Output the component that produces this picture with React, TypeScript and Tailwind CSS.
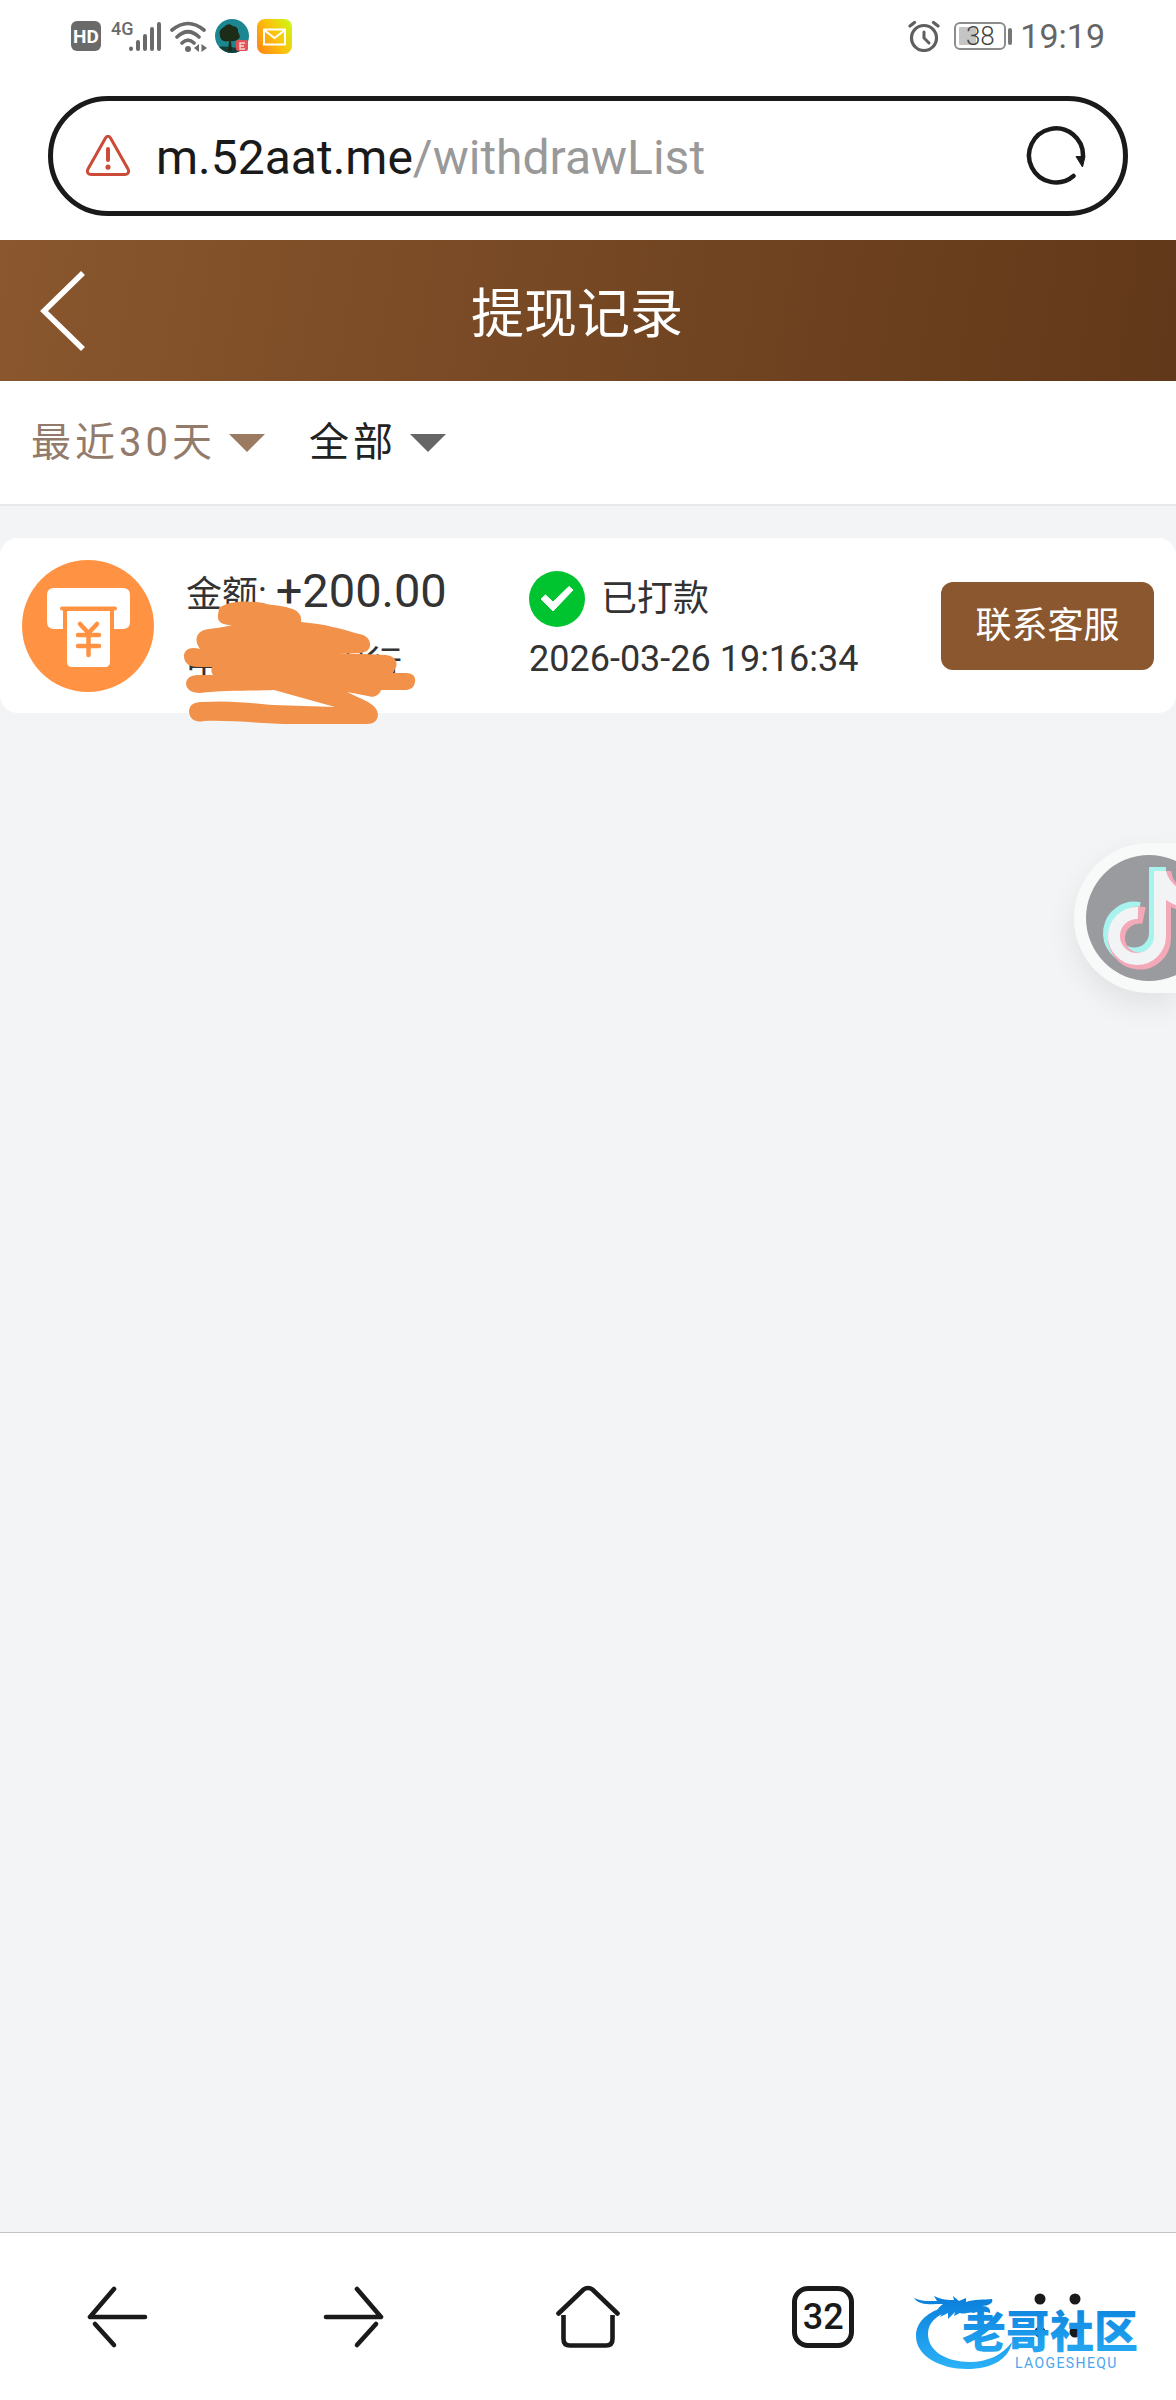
import type { ReactNode } from 'react';

const records = [
  {
    id: 1,
    amount: '+200.00',
    bankStart: '中',
    bankEnd: '银行',
    status: '已打款',
    time: '2026-03-26 19:16:34',
  },
];

function StatusBar() {
  return (
    <div className="h-[72px] px-[71px] flex items-center justify-between text-[#666]">
      <div className="flex items-center">
        <span className="w-[30px] h-[30px] mr-[10px] rounded-md bg-[#6a6a6a] text-white text-[19px] leading-none font-bold flex items-center justify-center">
          HD
        </span>
        <svg className="w-[50px] h-[34px]" viewBox="0 0 50 34" aria-hidden="true">
          <text x="0" y="16" fontSize="18" fontWeight="500" fill="#6a6a6a">4G</text>
          <g stroke="#6a6a6a" strokeWidth="4" strokeLinecap="round">
            <path d="M20 29.500V30M27 23V30M34 17V30M41 10V30M48 5V30" />
          </g>
        </svg>
        <svg className="w-[38px] h-[34px] ml-[8px]" viewBox="0 0 38 34" aria-hidden="true">
          <g fill="none" stroke="#6a6a6a" strokeWidth="3.600" strokeLinecap="round">
            <path d="M3 11Q19 -2 35 11M8 18Q19 7.500 30 18M13 24Q19 18 25 24" />
          </g>
          <circle cx="19" cy="30" r="3" fill="#6a6a6a" />
          <path d="M30 25V33L25 29ZM32.500 25V33L38 29Z" fill="#6a6a6a" />
        </svg>
        <svg className="w-[34px] h-[34px] ml-[8px]" viewBox="0 0 34 34" aria-hidden="true">
          <defs>
            <clipPath id="avatar">
              <circle cx="17" cy="17" r="17" />
            </clipPath>
          </defs>
          <g clipPath="url(#avatar)">
            <rect width="34" height="34" fill="#1c8791" />
            <path d="M0 28Q17 26 34 33V34H0Z" fill="#123f3c" />
            <path d="M5 17Q3 11 9 8Q13 3 18 7Q24 8 23 13Q27 18 22 21Q18 23 16 22L17 32H13L14 22Q6 24 5 17Z" fill="#1d2c17" />
          </g>
          <rect x="21" y="21" width="12" height="11" rx="2" fill="#e2545a" />
          <path d="M30 24H25V30H30M25 27H29" fill="none" stroke="#fbd3cc" strokeWidth="1.500" />
        </svg>
        <svg className="w-[35px] h-[35px] ml-[8px]" viewBox="0 0 35 35" aria-hidden="true">
          <defs>
            <linearGradient id="mail" x1="0" y1="0.800" x2="1" y2="0.200">
              <stop offset="0" stopColor="#ff8a12" />
              <stop offset="0.500" stopColor="#fdc00c" />
              <stop offset="1" stopColor="#d0f414" />
            </linearGradient>
          </defs>
          <rect width="35" height="35" rx="8" fill="url(#mail)" />
          <path d="M7 10.500H28V25.500H7ZM7 11L17.500 19L28 11" fill="none" stroke="#fff" strokeWidth="2" />
        </svg>
      </div>

      <div className="flex items-center">
        <svg className="w-[32px] h-[32px] mr-[14px]" viewBox="0 0 32 32" fill="none" stroke="#5f5f5f" strokeLinecap="round" aria-hidden="true">
          <circle cx="16" cy="18" r="12.500" strokeWidth="3.200" />
          <path d="M16 12V18L21 23" strokeWidth="3" />
          <path d="M2 6L6.500 2.500M30 6L25.500 2.500" strokeWidth="3.200" />
        </svg>
        <span className="w-[52px] h-[28px] p-[3px] rounded-md border-2 border-[#8c8c8c] flex items-center justify-center bg-linear-to-r from-[#c4c4c4] from-40% to-white to-40% bg-origin-content bg-clip-content text-[26px] leading-none font-light text-[#444]">
          38
        </span>
        <span className="w-[4px] h-[17px] ml-[2px] mr-[8px] rounded-sm bg-[#777]" />
        <span className="text-[34px] leading-none">19:19</span>
      </div>
    </div>
  );
}

function AddressBar() {
  return (
    <div className="py-[24px] px-[48px]">
      <div className="h-[120px] rounded-full border-[5px] border-[#1a1a1a] pl-[32px] pr-[37px] flex items-center">
        <svg className="w-[46px] h-[42px] shrink-0" viewBox="0 0 46 42" fill="none" stroke="#cb4a38" strokeWidth="3" strokeLinecap="round" strokeLinejoin="round" aria-hidden="true">
          <path d="M20.500 3Q23 -0.500 25.500 3L43 34Q45 39 40 39.500H6Q1 39 3 34Z" />
          <path d="M23 14V25" strokeWidth="4" />
          <path d="M23 32V32.200" strokeWidth="5" />
        </svg>
        <button className="flex-1 ml-[25px] pt-1 text-left text-[48px] leading-[60px] text-[#1a1a1a]">
          m.52aat.me<span className="text-[#999]">/withdrawList</span>
        </button>
        <button aria-label="刷新">
          <svg className="w-[60px] h-[60px]" viewBox="0 0 60 60" aria-hidden="true">
            <path d="M47.500 50A27 27 0 1 1 57 30" fill="none" stroke="#1a1a1a" strokeWidth="4.500" strokeLinecap="round" />
            <path d="M50 30.500H59L56.500 41Z" fill="#1a1a1a" stroke="#1a1a1a" strokeLinejoin="round" />
          </svg>
        </button>
      </div>
    </div>
  );
}

interface FilterSelectProps {
  label: string;
  option: string;
  className: string;
  arrow: string;
}

function FilterSelect({ label, option, className, arrow }: FilterSelectProps) {
  return (
    <label className="flex items-center gap-[13px]">
      <select
        aria-label={label}
        className={`appearance-none field-sizing-content bg-transparent text-[40px] leading-[56px] tracking-widest ${className}`}
      >
        <option>{option}</option>
      </select>
      <svg className="w-[36px] h-[18px]" viewBox="0 0 36 18" aria-hidden="true">
        <path d="M0 0H36L18 18Z" fill={arrow} />
      </svg>
    </label>
  );
}

function WithdrawIcon() {
  return (
    <svg className="w-[132px] h-[132px] shrink-0" viewBox="0 0 132 132" aria-hidden="true">
      <circle cx="66" cy="66" r="66" fill="#ff9343" />
      <path d="M32 28H101Q108 28 108 35V62Q108 69 101 69H92V50H41V69H32Q25 69 25 62V35Q25 28 32 28Z" fill="#fff" />
      <path d="M40 48.500H93" stroke="#ff9343" strokeWidth="4" strokeLinecap="round" />
      <path d="M45 51H88V102Q88 107 83 107H50Q45 107 45 102Z" fill="#fff" />
      <path d="M58 64L66.500 73L75 64M56 75H77M56 86H77M66.500 74V95" fill="none" stroke="#ff9343" strokeWidth="4.500" strokeLinecap="round" strokeLinejoin="round" />
    </svg>
  );
}

// Hand-drawn mask over the account details
function Scribble() {
  return (
    <svg className="absolute -left-[3px] top-[48px] w-[236px] h-[126px]" viewBox="0 0 236 126" fill="#f29149" aria-hidden="true">
      <path d="M36 8C45 1 62 0 80 3C90 6 99 5 106 8C115 10 119 15 118 22C142 24 159 29 176 34C184 35 188 41 187 46C186 51 181 53 176 53L156 53L203 55C211 56 215 61 213 67L210 73H223C230 73 233 77 232 82C231 88 227 90 222 90H198C196 96 190 98 185 96L164 92C185 102 193 104 195 114C195 121 190 124 184 124H110C80 124 50 120 21 121C12 123 7 119 6 112C6 104 12 102 20 102C50 100 75 104 90 105L152 107L91 90C70 91 40 90 17 93C8 93 3 89 3 83C4 77 9 75 16 75H30C28 72 28 70 29 67H15C6 67 1 63 1 56C1 50 7 46 17 49C11 41 13 33 21 30C30 28 39 28 49 25C39 25 34 22 35 15Z" />
    </svg>
  );
}

function RecordCard({ record }: { record: (typeof records)[number] }) {
  return (
    <li className="bg-white rounded-[18px] h-[175px] px-[22px] flex items-center text-[36px] text-[#333]">
      <WithdrawIcon />
      <div className="relative ml-[32px] w-[343px] pt-1 flex flex-col">
        <p className="leading-[70px]">
          金额: <span className="text-[47px]">{record.amount}</span>
        </p>
        <p className="flex gap-[108px] leading-[70px]">
          <span>{record.bankStart}</span>
          <span>{record.bankEnd}</span>
        </p>
        <Scribble />
      </div>
      <div className="flex-1 pt-1.5">
        <p className="flex items-center gap-[16px] leading-[60px]">
          <svg className="w-[56px] h-[56px]" viewBox="0 0 56 56" aria-hidden="true">
            <circle cx="28" cy="28" r="28" fill="#00c42f" />
            <path d="M12 28L24 40L44 19L40 15.500L24 31L16.500 24Z" fill="#fff" stroke="#fff" strokeLinejoin="round" />
          </svg>
          {record.status}
        </p>
        <p className="leading-[60px]">{record.time}</p>
      </div>
      <button className="h-[88px] w-[213px] rounded-xl bg-[#8a572e] text-white">联系客服</button>
    </li>
  );
}

function FloatingButton() {
  return (
    <button
      aria-label="TikTok"
      className="absolute right-0 top-[843px] w-[102px] h-[150px] pl-[12px] flex items-center overflow-hidden rounded-l-full bg-[#f8faf9] shadow-[0_12px_30px_rgba(0,0,0,0.08)]"
    >
      <svg className="w-[126px] h-[126px] shrink-0" viewBox="0 0 126 126" aria-hidden="true">
        <circle cx="63" cy="63" r="63" fill="#9a9b9f" />
        <g fill="none">
          <path d="M53 55.500A23 23 0 1 0 71.500 78.500V12" stroke="#a8f3ee" strokeWidth="17" />
          <path d="M58 60.500A23 23 0 1 0 76.500 83.500V36" stroke="#f4a9b8" strokeWidth="17" />
          <path d="M65.500 82V12" stroke="#a8f3ee" strokeWidth="5" />
          <path d="M52 58A23 23 0 1 0 74 81V16" stroke="#f2f3f4" strokeWidth="12" />
        </g>
        <path d="M80 16H85Q88 34 108 38V58Q95 57 85 52V46H80Z" fill="#f4a9b8" />
        <path d="M80 16Q84 32 104 38V53Q90 52 80 45Z" fill="#f2f3f4" />
      </svg>
    </button>
  );
}

function NavButton({ label, children }: { label: string; children: ReactNode }) {
  return (
    <button aria-label={label} className="flex-1 h-full flex items-center justify-center">
      {children}
    </button>
  );
}

function Watermark() {
  return (
    <svg className="absolute right-[16px] bottom-[22px] w-[250px] h-[96px] pointer-events-none" viewBox="0 0 250 96" aria-label="老哥社区">
      <defs>
        <linearGradient id="brand" gradientUnits="userSpaceOnUse" x1="0" y1="16" x2="0" y2="88">
          <stop offset="0" stopColor="#0b7fdc" />
          <stop offset="1" stopColor="#2cb3f8" />
        </linearGradient>
      </defs>
      <g fill="url(#brand)">
        <path d="M32 26C16 31 6 41 6 54C6 74 30 87 57 87C82 87 99 77 102 60C93 73 77 80 60 80C36 80 18 69 18 52C18 41 26 33 40 29Z" />
        <path d="M4 16C12 20 20 19 27 19L24 14C32 18 38 18 44 18L43 14L49 19L56 16V20C64 17 74 18 82 17C84 21 78 24 72 24C78 24 81 27 80 31C74 29 68 29 64 31C59 29 55 33 50 31L44 34L45 30L38 37L38 31L30 35L33 29L26 31C27 27 30 24 33 22C22 22 9 24 4 16Z" />
        <text x="52" y="66" fontSize="44" fontWeight="900">老哥社区</text>
      </g>
      <text x="105" y="86" fontSize="14" fill="#4aa6ee" className="tracking-widest">LAOGESHEQU</text>
    </svg>
  );
}

function BottomNav() {
  return (
    <nav className="relative h-[168px] border-t border-[#c4c4c4] bg-white flex items-center text-[#1a1a1a]">
      <NavButton label="后退">
        <svg className="w-[64px] h-[64px]" viewBox="0 0 64 64" fill="none" stroke="currentColor" strokeWidth="4.600" strokeLinecap="round" aria-hidden="true">
          <path d="M28 4L4 32H59" strokeLinejoin="round" />
          <path d="M9 39L28 60" />
        </svg>
      </NavButton>
      <NavButton label="前进">
        <svg className="w-[64px] h-[64px]" viewBox="0 0 64 64" fill="none" stroke="currentColor" strokeWidth="4.600" strokeLinecap="round" aria-hidden="true">
          <path d="M36 4L60 32H5" strokeLinejoin="round" />
          <path d="M55 39L36 60" />
        </svg>
      </NavButton>
      <NavButton label="主页">
        <svg className="w-[64px] h-[64px]" viewBox="0 0 64 64" fill="none" stroke="currentColor" strokeWidth="4.600" aria-hidden="true">
          <path d="M2.500 28.500L27 5Q32 1 37 5L61.500 28.500" strokeLinecap="round" />
          <path d="M7.500 30V54Q7.500 60.500 14 60.500H50Q56.500 60.500 56.500 54V30" />
        </svg>
      </NavButton>
      <NavButton label="标签页">
        <span className="w-[62px] h-[62px] rounded-[16px] border-[5px] border-[#1a1a1a] flex items-center justify-center text-[36px] leading-none font-medium">
          32
        </span>
      </NavButton>
      <NavButton label="菜单">
        <svg className="w-[64px] h-[64px]" viewBox="0 0 64 64" fill="currentColor" aria-hidden="true">
          <circle cx="14" cy="14" r="5.500" />
          <circle cx="49" cy="14" r="5.500" />
          <circle cx="14" cy="47" r="5.500" />
          <circle cx="49" cy="47" r="5.500" />
        </svg>
      </NavButton>
      <Watermark />
    </nav>
  );
}

export default function App() {
  return (
    <div className="relative min-h-screen flex flex-col bg-[#f2f4f6] font-[Roboto,'Noto_Sans_CJK_SC',sans-serif]">
      <div className="bg-white">
        <StatusBar />
        <AddressBar />
      </div>

      <header className="h-[141px] px-[40px] flex items-center bg-linear-100 from-[#8a572e] to-[#613819] text-white">
        <button aria-label="返回">
          <svg className="w-[46px] h-[80px]" viewBox="0 0 46 80" fill="none" stroke="#fff" strokeWidth="5.500" aria-hidden="true">
            <path d="M43 2L4 40L43 78" />
          </svg>
        </button>
        <h1 className="flex-1 text-center text-[53px] leading-[72px] pt-2 pr-[68px]">提现记录</h1>
      </header>

      <div className="h-[125px] px-[31px] flex items-center gap-[44px] bg-white border-b-2 border-[#e6e8ea]">
        <FilterSelect label="时间" option="最近30天" className="text-[#937b6b]" arrow="#9b7a62" />
        <FilterSelect label="状态" option="全部" className="text-[#222]" arrow="#666" />
      </div>

      <main className="flex-1 pt-[32px]">
        <ul>
          {records.map((record) => (
            <RecordCard key={record.id} record={record} />
          ))}
        </ul>
      </main>

      <FloatingButton />
      <BottomNav />
    </div>
  );
}
